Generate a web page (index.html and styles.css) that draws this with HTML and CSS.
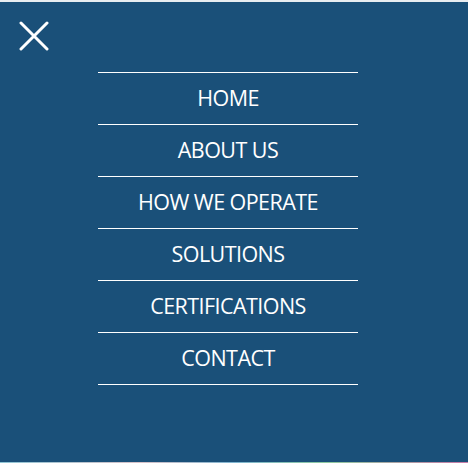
FILE: index.html
```html
<!DOCTYPE html>
<html lang="en">
<head>
<meta charset="utf-8">
<title>Menu</title>
<link rel="stylesheet" href="styles.css">
</head>
<body>
<div class="top-strip"></div>
<div class="overlay">
  <header class="bar">
    <button class="close" aria-label="Close menu">
      <svg width="30" height="30" viewBox="0 0 30 30"><path d="M2 2 L28 28 M28 2 L2 28" stroke="#fff" stroke-width="3" stroke-linecap="round" fill="none"/></svg>
    </button>
  </header>
  <nav class="menu">
    <ul class="menu-list">
      <li><a href="#">HOME</a></li>
      <li><a href="#">ABOUT US</a></li>
      <li><a href="#">HOW WE OPERATE</a></li>
      <li><a href="#">SOLUTIONS</a></li>
      <li><a href="#">CERTIFICATIONS</a></li>
      <li><a href="#">CONTACT</a></li>
    </ul>
  </nav>
</div>
<div class="bottom-strip"></div>
</body>
</html>
```
FILE: styles.css
```css
html, body {
  margin: 0;
  padding: 0;
  height: 100%;
}
body {
  background: #1a5079;
  font-family: "Open Sans", "Liberation Sans", sans-serif;
  display: flex;
  flex-direction: column;
  overflow: hidden;
}
.top-strip {
  height: 2px;
  background: #e9edf0;
  flex: none;
}
.bottom-strip {
  height: 1px;
  flex: none;
  background: linear-gradient(to right, #8fc6d6 0%, #d8c2c8 30%, #7fb5d1 50%, #8fcaa0 70%, #c87aa8 100%);
}
.overlay {
  flex: 1;
  display: flex;
  flex-direction: column;
}
.bar {
  padding: 19px 0 0 19px;
  height: 70px;
  box-sizing: border-box;
}
.close {
  background: none;
  border: 0;
  padding: 0;
  width: 30px;
  height: 30px;
  display: block;
  cursor: pointer;
}
.close svg {
  display: block;
}
.menu {
  padding-left: 98px;
}
.menu-list {
  list-style: none;
  margin: 0;
  padding: 0;
  width: 260px;
  border-top: 1px solid #fff;
}
.menu-list li {
  border-bottom: 1px solid #fff;
}
.menu-list a {
  display: flex;
  align-items: center;
  justify-content: center;
  height: 51px;
  box-sizing: border-box;
  padding-bottom: 3px;
  color: #fff;
  text-decoration: none;
  font-size: 21.5px;
  letter-spacing: -0.55px;
}
```
